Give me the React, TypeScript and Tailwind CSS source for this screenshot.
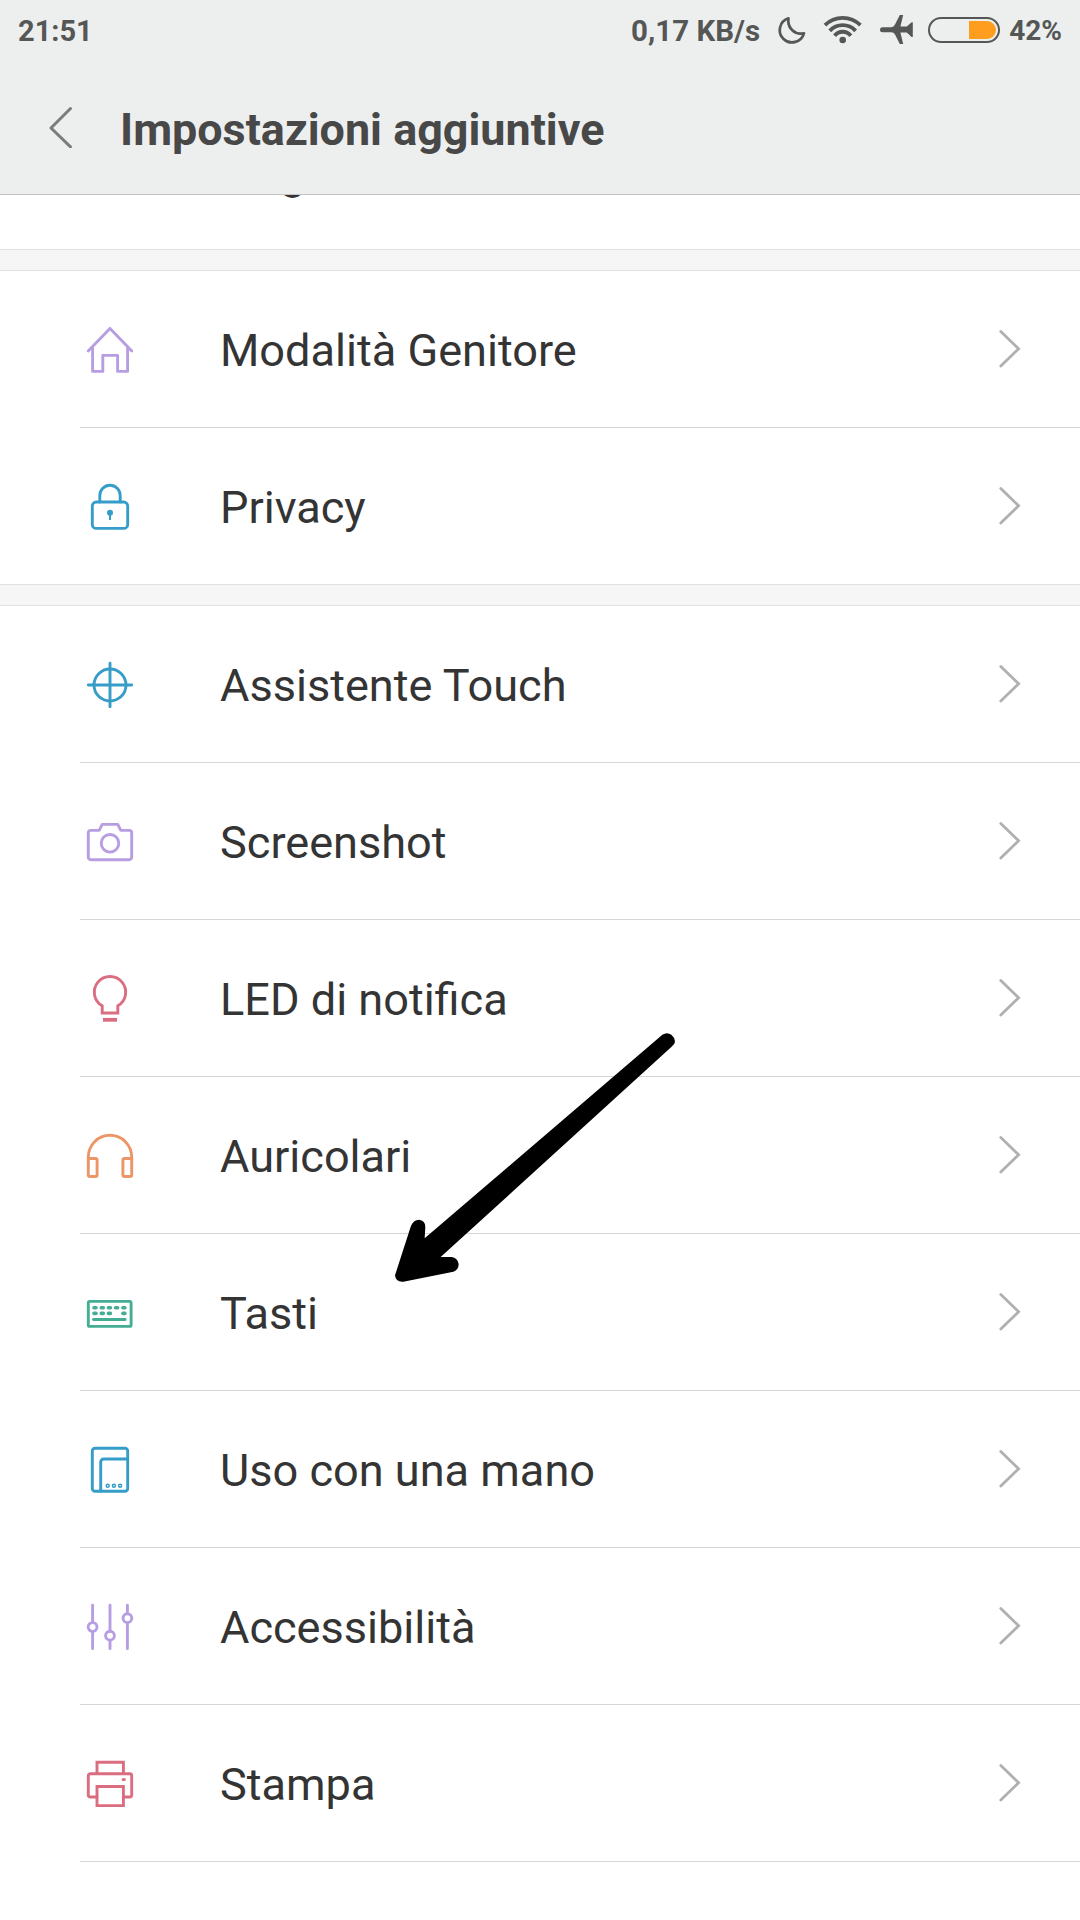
import React from 'react'

type IconProps = { children: React.ReactNode; className: string }

const RowIcon = ({ children, className }: IconProps) => (
  <svg
    className={`w-12 h-12 shrink-0 ${className}`}
    viewBox="0 0 48 48"
    fill="none"
    stroke="currentColor"
    strokeWidth="2.9"
    strokeLinecap="round"
    strokeLinejoin="round"
  >
    {children}
  </svg>
)

const HomeIcon = () => (
  <RowIcon className="text-[#b79ee3]">
    <path d="M2.2 26 24 3.4 45.8 26" />
    <path d="M6.6 23v23.4h10.2v-16h14.8v16h10V23" />
  </RowIcon>
)

const LockIcon = () => (
  <RowIcon className="text-[#369dc9]">
    <rect x="6.3" y="20" width="35.4" height="26.4" rx="4" />
    <path d="M13.8 20v-6.6a10.2 10.2 0 0 1 20.4 0V20" />
    <circle cx="24" cy="30.8" r="3" fill="currentColor" stroke="none" />
    <path d="M24 31v7" strokeWidth="2" strokeLinecap="butt" />
  </RowIcon>
)

const TargetIcon = () => (
  <RowIcon className="text-[#369dc9]">
    <circle cx="24" cy="25" r="16" />
    <path d="M2.3 25h43.4M24 3.300v43.400" />
  </RowIcon>
)

const CameraIcon = () => (
  <RowIcon className="text-[#b79ee3]">
    <path d="M4.8 13.4h8.4l3-6h15.6l3 6h8.4a2.5 2.5 0 0 1 2.5 2.5v24.4a2.5 2.5 0 0 1-2.5 2.5H4.8a2.5 2.5 0 0 1-2.5-2.5V15.9a2.5 2.5 0 0 1 2.5-2.5z" />
    <circle cx="24" cy="26.3" r="8.8" />
  </RowIcon>
)

const BulbIcon = () => (
  <RowIcon className="text-[#da6e80]">
    <path d="M16.2 39v-7.2a15.7 15.7 0 1 1 15.6 0V39z" strokeLinejoin="miter" />
    <path d="M17 45.8h14" strokeWidth="3.8" strokeLinecap="butt" />
  </RowIcon>
)

const HeadphonesIcon = () => (
  <RowIcon className="text-[#ec9566]">
    <path d="M2.3 29v-3a21.7 21.7 0 0 1 43.4 0v3" />
    <rect x="2.3" y="27.5" width="8.8" height="18" rx="1.8" />
    <rect x="36.9" y="27.5" width="8.8" height="18" rx="1.8" />
  </RowIcon>
)

const KeyboardIcon = () => (
  <RowIcon className="text-[#44ad93]">
    <rect x="2.3" y="13.4" width="42.8" height="25" rx="1.5" />
    <path d="M8 19.7h2M15.3 19.7h2M22.4 19.7h2M29.6 19.7h2M36.9 19.7h2" strokeWidth="3.6" />
    <path d="M8 25.4h2M15.3 25.4h2M22.4 25.4h2M36.9 25.4h2" strokeWidth="3.6" />
    <path d="M7.5 31.5h31.6" />
  </RowIcon>
)

const OneHandIcon = () => (
  <RowIcon className="text-[#369dc9]">
    <rect x="6.3" y="3.3" width="35.4" height="43" rx="2.8" />
    <path d="M14.7 46V17a3 3 0 0 1 3-3h24" />
    <g strokeWidth="1.5">
      <circle cx="21.7" cy="40.7" r="1.5" />
      <circle cx="27.9" cy="40.7" r="1.5" />
      <circle cx="34.1" cy="40.7" r="1.5" />
    </g>
  </RowIcon>
)

const SlidersIcon = () => (
  <RowIcon className="text-[#b79ee3]">
    <path d="M6.6 3.2v17.4M6.6 29.4v17.2M24 3.2v26M24 38.2v8.4M41.4 3.2v8.4M41.4 20.6v26" />
    <circle cx="6.6" cy="25" r="4.4" />
    <circle cx="24" cy="33.7" r="4.4" />
    <circle cx="41.4" cy="16.2" r="4.4" />
  </RowIcon>
)

const PrinterIcon = () => (
  <RowIcon className="text-[#da6e80]">
    <path d="M11 14.5V3.3h26.4v11.2" strokeLinejoin="miter" />
    <path d="M11 38H4.3a2 2 0 0 1-2-2V16.7a2 2 0 0 1 2-2h39.4a2 2 0 0 1 2 2V36a2 2 0 0 1-2 2h-6.3" />
    <path d="M11 27.5h26.4v19.2H11z" strokeLinejoin="miter" />
    <path d="M37 20.6h1.4" />
  </RowIcon>
)

const family = [
  { label: 'Modalità Genitore', icon: <HomeIcon /> },
  { label: 'Privacy', icon: <LockIcon /> },
]

const device = [
  { label: 'Assistente Touch', icon: <TargetIcon /> },
  { label: 'Screenshot', icon: <CameraIcon /> },
  { label: 'LED di notifica', icon: <BulbIcon /> },
  { label: 'Auricolari', icon: <HeadphonesIcon /> },
  { label: 'Tasti', icon: <KeyboardIcon /> },
  { label: 'Uso con una mano', icon: <OneHandIcon /> },
  { label: 'Accessibilità', icon: <SlidersIcon /> },
  { label: 'Stampa', icon: <PrinterIcon /> },
]

const Row = ({ label, icon }: { label: string; icon?: React.ReactNode }) => (
  <div className="h-[156px] shrink-0 flex items-center pl-[86px] pr-[58px]">
    <div className="w-[134px] shrink-0">{icon}</div>
    <span className="grow pt-[3px] text-[45.1px] leading-[56px] text-[#343434]">{label}</span>
    <svg className="w-6 h-10" viewBox="0 0 24 40" fill="none" stroke="#b0b0b0" strokeWidth="2.8" strokeLinecap="round">
      <path d="M2.8 2.5 20.6 19.7 2.8 37" />
    </svg>
  </div>
)

const Divider = () => <div className="ml-20 h-px shrink-0 bg-[#d6d6d6]" />

const Gap = () => <div className="h-[22px] shrink-0 bg-[#f6f6f6] border-y border-[#e0e0e0]" />

const StatusBar = () => (
  <div className="h-[60px] flex items-center justify-between pl-[18px] pr-[18px] text-[29.5px] font-bold text-[#555756]">
    <span className="pt-[3px] text-[29px]">21:51</span>
    <div className="flex items-center">
      <span className="pt-[3px]">0,17 KB/s</span>
      <svg className="w-[30px] h-[30px] ml-[17px]" viewBox="0 0 30 30" fill="none" stroke="currentColor" strokeWidth="2.7" strokeLinejoin="round">
        <path d="M11.500 3.300A12.300 12.300 0 1 0 27 18.200C18 20.500 10 13 11.500 3.300z" />
      </svg>
      <svg className="w-[40px] h-[30px] ml-[16px]" viewBox="0 0 40 30" fill="none" stroke="currentColor" strokeWidth="3.9">
        <path d="M2 10.200a25 25 0 0 1 35.400 0" />
        <path d="M6.800 15.800a17.600 17.600 0 0 1 25.800 0" />
        <path d="M11.600 20.800a10.200 10.200 0 0 1 16.200 0" />
        <circle cx="19.700" cy="25" r="3.300" fill="currentColor" stroke="none" />
      </svg>
      <svg className="w-[34px] h-[30px] ml-[16px]" viewBox="0 0 34 30" fill="currentColor">
        <path d="M3.500 12.200h8.700q2.600 0 3.800-2.600L20.800 0h3.400l-2.800 11.600h6.400l4.800-4.400h1.200v14.800h-1.200l-4.800-4.600h-6.400l2.800 11.600h-3.400L16 19.600q-1.200-2.400-3.800-2.400H3.500a2.500 2.500 0 0 1 0-5z" />
      </svg>
      <div className="w-[72px] h-[26px] ml-[15px] p-0.5 rounded-full border-2 border-[#555756] flex justify-end">
        <div className="w-[27px] h-full rounded-r-full bg-[#ff9d1e]" />
      </div>
      <span className="ml-[9px] pt-[2px] text-[28px]">42%</span>
    </div>
  </div>
)

const App = () => {
  return (
    <div className="relative w-[1080px] h-[1920px] overflow-hidden bg-white flex flex-col font-['Roboto',sans-serif]">
      <header className="h-[195px] shrink-0 bg-[#edefee] border-b border-[#c4c4c4]">
        <StatusBar />
        <div className="h-[134px] flex items-center pl-[48px]">
          <svg className="w-[26px] h-[42px]" viewBox="0 0 26 42" fill="none" stroke="#7b7c7c" strokeWidth="3" strokeLinecap="round" strokeLinejoin="round">
            <path d="M22.500 2.500 3 22l19.500 18.800" />
          </svg>
          <h1 className="ml-[46px] pt-1.5 text-[44.9px] font-bold text-[#484848]">Impostazioni aggiuntive</h1>
        </div>
      </header>

      {/* last row of the previous group, scrolled under the header */}
      <div className="h-[54px] shrink-0 overflow-hidden flex flex-col justify-end">
        <div className="-mb-px">
          <Row label="Lingua e immissione" />
        </div>
      </div>

      <Gap />
      {family.map((item, i) => (
        <React.Fragment key={item.label}>
          {i > 0 && <Divider />}
          <Row {...item} />
        </React.Fragment>
      ))}
      <Gap />
      {device.map((item) => (
        <React.Fragment key={item.label}>
          <Row {...item} />
          <Divider />
        </React.Fragment>
      ))}

      {/* arrow pointing at "Tasti" */}
      <svg className="absolute left-[370px] top-[1010px] w-[330px] h-[290px]" viewBox="0 0 990 870">
        <path d="M877 74Q891 65 904 74Q919 87 913 101L904 111L212 741L245 741Q263 744 266 762Q266 779 250 785L100 815Q77 817 75 796L123 647Q131 629 147 629Q166 632 166 650L164 685Z" />
      </svg>
    </div>
  )
}

export default App
